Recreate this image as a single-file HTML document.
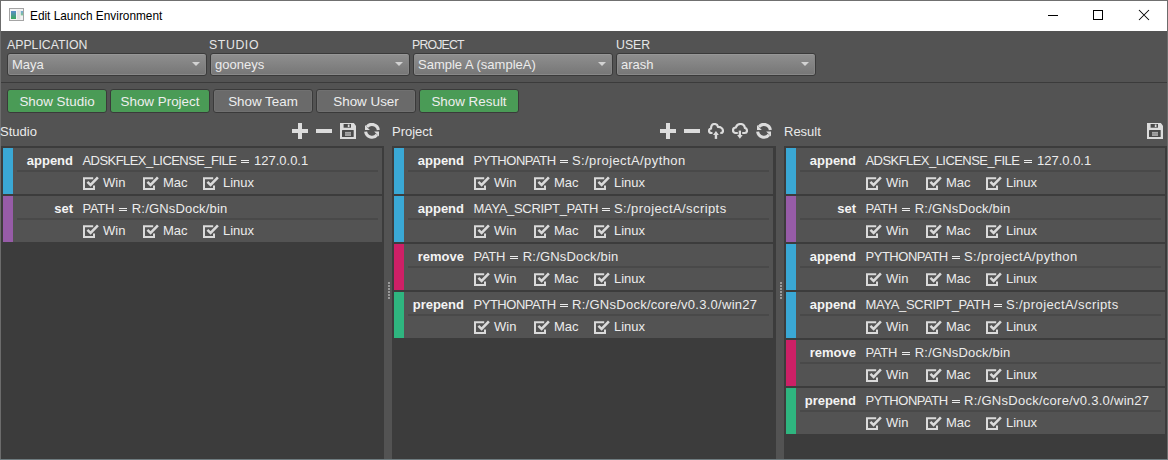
<!DOCTYPE html>
<html><head><meta charset="utf-8">
<style>

*{box-sizing:border-box;margin:0;padding:0}
html,body{width:1168px;height:460px;overflow:hidden;background:#535353;font-family:"Liberation Sans",sans-serif;}
.abs{position:absolute}
#win{position:absolute;left:0;top:0;width:1168px;height:460px;background:#535353;}
#bt{left:0;top:0;width:1168px;height:1px;background:#707070}
#bl{left:0;top:0;width:1px;height:460px;background:#6c6c6c}
#br{left:1167px;top:0;width:1px;height:460px;background:#6c6c6c}
#bb{left:0;top:459px;width:1168px;height:1px;background:#6f7c80}
#title{left:1px;top:1px;width:1166px;height:30px;background:#fff}
#ttxt{left:30px;top:9px;font-size:11.85px;color:#000;white-space:pre;line-height:14px}
.lbl{top:38px;font-size:12.3px;color:#e6e6e6;white-space:pre;line-height:14px}
.combo{top:53px;width:200px;height:23px;border:1px solid #3a3a3a;border-radius:3px;
  background:linear-gradient(#8f8f8f,#767676);box-shadow:inset 0 -1px 0 #888,inset 0 1px 0 #979797,inset 1px 0 0 #8a8a8a,inset -1px 0 0 #858585}
.combo span{position:absolute;left:4px;top:3px;font-size:13px;color:#ececec;white-space:pre;line-height:15px}
.combo i{position:absolute;left:183.75px;top:8.3px;width:0;height:0;border-left:4px solid transparent;border-right:4px solid transparent;border-top:4px solid #d2d2d2}
#sep{left:1px;top:82px;width:1166px;height:1px;background:#3b3b3b}
.btn{top:89px;width:100px;height:24px;border:1px solid #3a3a3a;border-radius:3px;background:#6a6a6a;box-shadow:inset 0 0 0 1px #707070;color:#eee;font-size:13.4px;text-align:center;line-height:23px;white-space:pre}
.btn.g{background:#4a9b56;box-shadow:none}
.ph{top:125px;font-size:13px;color:#eaeaea;white-space:pre;line-height:14px}
.panel{top:146px;height:313px;background:#3c3c3c}
.item{position:absolute;left:2px;width:379px;height:46px;background:#535353}
.bar{position:absolute;left:0;top:0;width:10px;height:46px}
.op{position:absolute;right:309px;top:5px;font-size:13px;font-weight:bold;color:#f4f4f4;white-space:pre;line-height:15px}
.val{position:absolute;left:80px;top:5px;font-size:13px;word-spacing:2px;color:#ececec;white-space:pre;line-height:15px}
.eq{position:absolute;top:12px;width:8px;height:3px;border-top:1px solid #ececec;border-bottom:1px solid #ececec}
.isep{position:absolute;left:14px;top:22px;width:361px;height:2px;background:#494949}
.cb{position:absolute;top:28px;width:80px;height:14px}
.cb svg{position:absolute;left:0;top:0}
.cb span{position:absolute;left:20px;top:0px;font-size:13px;color:#ececec;white-space:pre;line-height:14px}
.ic{position:absolute;top:123px}

</style></head><body>
<div id="win">
<div class="abs" id="title"></div>
<div class="abs" id="bt"></div><div class="abs" id="bl"></div><div class="abs" id="br"></div><div class="abs" id="bb"></div>
<svg class="abs" style="left:9px;top:8px" width="15" height="13" viewBox="0 0 15 13"><defs><linearGradient id="tg" x1="0" y1="0" x2="0" y2="1"><stop offset="0" stop-color="#5b8ccc"/><stop offset="1" stop-color="#3aa85a"/></linearGradient><linearGradient id="tg2" x1="0" y1="0" x2="0" y2="1"><stop offset="0" stop-color="#7aa8d8"/><stop offset="1" stop-color="#7cc890"/></linearGradient></defs><rect x="0.5" y="0.5" width="14" height="12" fill="#f4f4f4" stroke="#a4a4a4"/><rect x="2" y="3" width="5" height="8" fill="url(#tg)"/><rect x="8" y="2.5" width="3.3" height="9" fill="#e2e2e2"/><rect x="11.8" y="3" width="2.2" height="4.4" fill="url(#tg2)"/></svg>
<div class="abs" id="ttxt">Edit Launch Environment</div>
<svg class="abs" style="left:1040px;top:1px" width="126" height="30"><line x1="8" y1="14.5" x2="18" y2="14.5" stroke="#000" stroke-width="1"/><rect x="53.5" y="9.5" width="9" height="9" fill="none" stroke="#000" stroke-width="1"/><path d="M99 9 L109 19 M109 9 L99 19" stroke="#000" stroke-width="1.05" fill="none"/></svg>
<div class="abs lbl" style="left:7px;">APPLICATION</div><div class="abs combo" style="left:7px"><span>Maya</span><i></i></div>
<div class="abs lbl" style="left:210px;letter-spacing:0.6px;margin-left:-1px">STUDIO</div><div class="abs combo" style="left:210px"><span>gooneys</span><i></i></div>
<div class="abs lbl" style="left:413px;letter-spacing:-0.8px;margin-left:-1px">PROJECT</div><div class="abs combo" style="left:413px"><span>Sample A (sampleA)</span><i></i></div>
<div class="abs lbl" style="left:616px;">USER</div><div class="abs combo" style="left:616px"><span>arash</span><i></i></div>
<div class="abs" id="sep"></div>
<div class="abs btn g" style="left:7px">Show Studio</div>
<div class="abs btn g" style="left:110px">Show Project</div>
<div class="abs btn" style="left:213px">Show Team</div>
<div class="abs btn" style="left:316px">Show User</div>
<div class="abs btn g" style="left:419px">Show Result</div>
<div class="abs ph" style="left:0px">Studio</div><svg class="ic" style="left:292px" width="16" height="16"><rect x="0" y="6" width="16" height="4" fill="#dcdcdc"/><rect x="6" y="0" width="4" height="16" fill="#dcdcdc"/></svg><svg class="ic" style="left:316px" width="16" height="16"><rect x="0" y="6" width="16" height="4" fill="#dcdcdc"/></svg><svg class="ic" style="left:340px" width="16" height="16" viewBox="0 0 16 16"><path d="M0 0 H13.8 L16 2.8 V16 H0 Z" fill="#dcdcdc"/><rect x="3.6" y="1" width="7.4" height="3.7" fill="#4a4a4a"/><rect x="7.8" y="1.5" width="1.7" height="2.6" fill="#dcdcdc"/><rect x="2" y="6.9" width="11.7" height="7.1" rx="0.6" fill="#4a4a4a"/><rect x="5" y="8.9" width="6" height="4.1" fill="#a8a8a8"/><rect x="5" y="10" width="6" height="0.6" fill="#8a8a8a"/><rect x="5" y="11.6" width="6" height="0.6" fill="#8a8a8a"/></svg><svg class="ic" style="left:364px" width="16" height="16" viewBox="0 0 16 16"><path d="M14.35 7 A6.4 6.4 0 0 0 2.96 3.86" stroke="#dcdcdc" stroke-width="3.1" fill="none"/><path d="M1 2 L1 7 L5.8 7 Z" fill="#dcdcdc"/><path d="M1.65 8.6 A6.4 6.4 0 0 0 13.04 11.74" stroke="#dcdcdc" stroke-width="3.1" fill="none"/><path d="M15 13.6 L15 8.6 L10.2 8.6 Z" fill="#dcdcdc"/></svg><div class="abs panel" style="left:1px;width:383px"><div class="item" style="top:2px"><div class="bar" style="background:#3aa8d5"></div><div class="op">append</div><div class="val" style="left:79.5px;letter-spacing:-0.555px">ADSKFLEX_LICENSE_FILE</div><div class="eq" style="left:237.9px"></div><div class="val" style="left:251px;letter-spacing:0px">127.0.0.1</div><div class="isep"></div><div class="cb" style="left:80px"><svg width="18" height="16" viewBox="0 0 18 16"><path d="M10.2 2.3 H1 V13 H11 V9.6" stroke="#dadada" stroke-width="2" fill="none"/><path d="M4.4 5.9 L7.6 8.9 L14.9 1.4" stroke="#dadada" stroke-width="2.6" fill="none"/></svg><span>Win</span></div><div class="cb" style="left:140px"><svg width="18" height="16" viewBox="0 0 18 16"><path d="M10.2 2.3 H1 V13 H11 V9.6" stroke="#dadada" stroke-width="2" fill="none"/><path d="M4.4 5.9 L7.6 8.9 L14.9 1.4" stroke="#dadada" stroke-width="2.6" fill="none"/></svg><span>Mac</span></div><div class="cb" style="left:200px"><svg width="18" height="16" viewBox="0 0 18 16"><path d="M10.2 2.3 H1 V13 H11 V9.6" stroke="#dadada" stroke-width="2" fill="none"/><path d="M4.4 5.9 L7.6 8.9 L14.9 1.4" stroke="#dadada" stroke-width="2.6" fill="none"/></svg><span>Linux</span></div></div><div class="item" style="top:50px"><div class="bar" style="background:#975ca8"></div><div class="op">set</div><div class="val" style="left:79.5px;letter-spacing:-0.3px">PATH</div><div class="eq" style="left:116px"></div><div class="val" style="left:128.8px;letter-spacing:0.17px">R:/GNsDock/bin</div><div class="isep"></div><div class="cb" style="left:80px"><svg width="18" height="16" viewBox="0 0 18 16"><path d="M10.2 2.3 H1 V13 H11 V9.6" stroke="#dadada" stroke-width="2" fill="none"/><path d="M4.4 5.9 L7.6 8.9 L14.9 1.4" stroke="#dadada" stroke-width="2.6" fill="none"/></svg><span>Win</span></div><div class="cb" style="left:140px"><svg width="18" height="16" viewBox="0 0 18 16"><path d="M10.2 2.3 H1 V13 H11 V9.6" stroke="#dadada" stroke-width="2" fill="none"/><path d="M4.4 5.9 L7.6 8.9 L14.9 1.4" stroke="#dadada" stroke-width="2.6" fill="none"/></svg><span>Mac</span></div><div class="cb" style="left:200px"><svg width="18" height="16" viewBox="0 0 18 16"><path d="M10.2 2.3 H1 V13 H11 V9.6" stroke="#dadada" stroke-width="2" fill="none"/><path d="M4.4 5.9 L7.6 8.9 L14.9 1.4" stroke="#dadada" stroke-width="2.6" fill="none"/></svg><span>Linux</span></div></div></div>
<div class="abs ph" style="left:392px">Project</div><svg class="ic" style="left:660px" width="16" height="16"><rect x="0" y="6" width="16" height="4" fill="#dcdcdc"/><rect x="6" y="0" width="4" height="16" fill="#dcdcdc"/></svg><svg class="ic" style="left:684px" width="16" height="16"><rect x="0" y="6" width="16" height="4" fill="#dcdcdc"/></svg><svg class="ic" style="left:708px" width="16" height="16" viewBox="0 0 16 16"><path d="M4.5 10 H3.3 C1.9 10 1 9 1 7.8 C1 6.6 1.9 5.7 3 5.5 C3.1 2.9 4.6 1 6.5 1 C8.3 1 9.6 2.2 10.1 3.8 C12.8 3.8 15 5.6 15 8 C15 9.2 14 10 12.3 10" stroke="#dcdcdc" stroke-width="2.2" fill="none"/><rect x="6.75" y="11" width="2.4" height="4.9" fill="#dcdcdc"/><path d="M7.95 8.0 L5.0 11.9 L10.9 11.9 Z" fill="#dcdcdc"/></svg><svg class="ic" style="left:732px" width="16" height="16" viewBox="0 0 16 16"><path d="M5.8 10 H3.5 C2 10 1 8.6 1 7.2 C1 5.7 2.2 4.6 3.8 4.5 C4.5 2.5 6.3 1 8.4 1 C10.6 1 12.5 2.6 12.9 4.9 C14.1 5.1 15 6.2 15 7.8 C15 9 14 10 12.8 10 H10.2" stroke="#dcdcdc" stroke-width="2.2" fill="none"/><rect x="6.7" y="7.6" width="2.3" height="5" fill="#dcdcdc"/><path d="M5.1 11.9 L10.7 11.9 L7.9 15.8 Z" fill="#dcdcdc"/></svg><svg class="ic" style="left:756px" width="16" height="16" viewBox="0 0 16 16"><path d="M14.35 7 A6.4 6.4 0 0 0 2.96 3.86" stroke="#dcdcdc" stroke-width="3.1" fill="none"/><path d="M1 2 L1 7 L5.8 7 Z" fill="#dcdcdc"/><path d="M1.65 8.6 A6.4 6.4 0 0 0 13.04 11.74" stroke="#dcdcdc" stroke-width="3.1" fill="none"/><path d="M15 13.6 L15 8.6 L10.2 8.6 Z" fill="#dcdcdc"/></svg><div class="abs panel" style="left:392px;width:384px"><div class="item" style="top:2px"><div class="bar" style="background:#3aa8d5"></div><div class="op">append</div><div class="val" style="left:79.5px;letter-spacing:-0.48px">PYTHONPATH</div><div class="eq" style="left:165.5px"></div><div class="val" style="left:178px;letter-spacing:0.41px">S:/projectA/python</div><div class="isep"></div><div class="cb" style="left:80px"><svg width="18" height="16" viewBox="0 0 18 16"><path d="M10.2 2.3 H1 V13 H11 V9.6" stroke="#dadada" stroke-width="2" fill="none"/><path d="M4.4 5.9 L7.6 8.9 L14.9 1.4" stroke="#dadada" stroke-width="2.6" fill="none"/></svg><span>Win</span></div><div class="cb" style="left:140px"><svg width="18" height="16" viewBox="0 0 18 16"><path d="M10.2 2.3 H1 V13 H11 V9.6" stroke="#dadada" stroke-width="2" fill="none"/><path d="M4.4 5.9 L7.6 8.9 L14.9 1.4" stroke="#dadada" stroke-width="2.6" fill="none"/></svg><span>Mac</span></div><div class="cb" style="left:200px"><svg width="18" height="16" viewBox="0 0 18 16"><path d="M10.2 2.3 H1 V13 H11 V9.6" stroke="#dadada" stroke-width="2" fill="none"/><path d="M4.4 5.9 L7.6 8.9 L14.9 1.4" stroke="#dadada" stroke-width="2.6" fill="none"/></svg><span>Linux</span></div></div><div class="item" style="top:50px"><div class="bar" style="background:#3aa8d5"></div><div class="op">append</div><div class="val" style="left:79.5px;letter-spacing:-0.33px">MAYA_SCRIPT_PATH</div><div class="eq" style="left:208px"></div><div class="val" style="left:220px;letter-spacing:0.41px">S:/projectA/scripts</div><div class="isep"></div><div class="cb" style="left:80px"><svg width="18" height="16" viewBox="0 0 18 16"><path d="M10.2 2.3 H1 V13 H11 V9.6" stroke="#dadada" stroke-width="2" fill="none"/><path d="M4.4 5.9 L7.6 8.9 L14.9 1.4" stroke="#dadada" stroke-width="2.6" fill="none"/></svg><span>Win</span></div><div class="cb" style="left:140px"><svg width="18" height="16" viewBox="0 0 18 16"><path d="M10.2 2.3 H1 V13 H11 V9.6" stroke="#dadada" stroke-width="2" fill="none"/><path d="M4.4 5.9 L7.6 8.9 L14.9 1.4" stroke="#dadada" stroke-width="2.6" fill="none"/></svg><span>Mac</span></div><div class="cb" style="left:200px"><svg width="18" height="16" viewBox="0 0 18 16"><path d="M10.2 2.3 H1 V13 H11 V9.6" stroke="#dadada" stroke-width="2" fill="none"/><path d="M4.4 5.9 L7.6 8.9 L14.9 1.4" stroke="#dadada" stroke-width="2.6" fill="none"/></svg><span>Linux</span></div></div><div class="item" style="top:98px"><div class="bar" style="background:#cd2066"></div><div class="op">remove</div><div class="val" style="left:79.5px;letter-spacing:-0.3px">PATH</div><div class="eq" style="left:116px"></div><div class="val" style="left:128.8px;letter-spacing:0.17px">R:/GNsDock/bin</div><div class="isep"></div><div class="cb" style="left:80px"><svg width="18" height="16" viewBox="0 0 18 16"><path d="M10.2 2.3 H1 V13 H11 V9.6" stroke="#dadada" stroke-width="2" fill="none"/><path d="M4.4 5.9 L7.6 8.9 L14.9 1.4" stroke="#dadada" stroke-width="2.6" fill="none"/></svg><span>Win</span></div><div class="cb" style="left:140px"><svg width="18" height="16" viewBox="0 0 18 16"><path d="M10.2 2.3 H1 V13 H11 V9.6" stroke="#dadada" stroke-width="2" fill="none"/><path d="M4.4 5.9 L7.6 8.9 L14.9 1.4" stroke="#dadada" stroke-width="2.6" fill="none"/></svg><span>Mac</span></div><div class="cb" style="left:200px"><svg width="18" height="16" viewBox="0 0 18 16"><path d="M10.2 2.3 H1 V13 H11 V9.6" stroke="#dadada" stroke-width="2" fill="none"/><path d="M4.4 5.9 L7.6 8.9 L14.9 1.4" stroke="#dadada" stroke-width="2.6" fill="none"/></svg><span>Linux</span></div></div><div class="item" style="top:146px"><div class="bar" style="background:#2fb57f"></div><div class="op">prepend</div><div class="val" style="left:79.5px;letter-spacing:-0.48px">PYTHONPATH</div><div class="eq" style="left:165.5px"></div><div class="val" style="left:178px;letter-spacing:0.27px">R:/GNsDock/core/v0.3.0/win27</div><div class="isep"></div><div class="cb" style="left:80px"><svg width="18" height="16" viewBox="0 0 18 16"><path d="M10.2 2.3 H1 V13 H11 V9.6" stroke="#dadada" stroke-width="2" fill="none"/><path d="M4.4 5.9 L7.6 8.9 L14.9 1.4" stroke="#dadada" stroke-width="2.6" fill="none"/></svg><span>Win</span></div><div class="cb" style="left:140px"><svg width="18" height="16" viewBox="0 0 18 16"><path d="M10.2 2.3 H1 V13 H11 V9.6" stroke="#dadada" stroke-width="2" fill="none"/><path d="M4.4 5.9 L7.6 8.9 L14.9 1.4" stroke="#dadada" stroke-width="2.6" fill="none"/></svg><span>Mac</span></div><div class="cb" style="left:200px"><svg width="18" height="16" viewBox="0 0 18 16"><path d="M10.2 2.3 H1 V13 H11 V9.6" stroke="#dadada" stroke-width="2" fill="none"/><path d="M4.4 5.9 L7.6 8.9 L14.9 1.4" stroke="#dadada" stroke-width="2.6" fill="none"/></svg><span>Linux</span></div></div></div>
<div class="abs ph" style="left:784px">Result</div><svg class="ic" style="left:1147px" width="16" height="16" viewBox="0 0 16 16"><path d="M0 0 H13.8 L16 2.8 V16 H0 Z" fill="#dcdcdc"/><rect x="3.6" y="1" width="7.4" height="3.7" fill="#4a4a4a"/><rect x="7.8" y="1.5" width="1.7" height="2.6" fill="#dcdcdc"/><rect x="2" y="6.9" width="11.7" height="7.1" rx="0.6" fill="#4a4a4a"/><rect x="5" y="8.9" width="6" height="4.1" fill="#a8a8a8"/><rect x="5" y="10" width="6" height="0.6" fill="#8a8a8a"/><rect x="5" y="11.6" width="6" height="0.6" fill="#8a8a8a"/></svg><div class="abs panel" style="left:784px;width:383px"><div class="item" style="top:2px"><div class="bar" style="background:#3aa8d5"></div><div class="op">append</div><div class="val" style="left:79.5px;letter-spacing:-0.555px">ADSKFLEX_LICENSE_FILE</div><div class="eq" style="left:237.9px"></div><div class="val" style="left:251px;letter-spacing:0px">127.0.0.1</div><div class="isep"></div><div class="cb" style="left:80px"><svg width="18" height="16" viewBox="0 0 18 16"><path d="M10.2 2.3 H1 V13 H11 V9.6" stroke="#dadada" stroke-width="2" fill="none"/><path d="M4.4 5.9 L7.6 8.9 L14.9 1.4" stroke="#dadada" stroke-width="2.6" fill="none"/></svg><span>Win</span></div><div class="cb" style="left:140px"><svg width="18" height="16" viewBox="0 0 18 16"><path d="M10.2 2.3 H1 V13 H11 V9.6" stroke="#dadada" stroke-width="2" fill="none"/><path d="M4.4 5.9 L7.6 8.9 L14.9 1.4" stroke="#dadada" stroke-width="2.6" fill="none"/></svg><span>Mac</span></div><div class="cb" style="left:200px"><svg width="18" height="16" viewBox="0 0 18 16"><path d="M10.2 2.3 H1 V13 H11 V9.6" stroke="#dadada" stroke-width="2" fill="none"/><path d="M4.4 5.9 L7.6 8.9 L14.9 1.4" stroke="#dadada" stroke-width="2.6" fill="none"/></svg><span>Linux</span></div></div><div class="item" style="top:50px"><div class="bar" style="background:#975ca8"></div><div class="op">set</div><div class="val" style="left:79.5px;letter-spacing:-0.3px">PATH</div><div class="eq" style="left:116px"></div><div class="val" style="left:128.8px;letter-spacing:0.17px">R:/GNsDock/bin</div><div class="isep"></div><div class="cb" style="left:80px"><svg width="18" height="16" viewBox="0 0 18 16"><path d="M10.2 2.3 H1 V13 H11 V9.6" stroke="#dadada" stroke-width="2" fill="none"/><path d="M4.4 5.9 L7.6 8.9 L14.9 1.4" stroke="#dadada" stroke-width="2.6" fill="none"/></svg><span>Win</span></div><div class="cb" style="left:140px"><svg width="18" height="16" viewBox="0 0 18 16"><path d="M10.2 2.3 H1 V13 H11 V9.6" stroke="#dadada" stroke-width="2" fill="none"/><path d="M4.4 5.9 L7.6 8.9 L14.9 1.4" stroke="#dadada" stroke-width="2.6" fill="none"/></svg><span>Mac</span></div><div class="cb" style="left:200px"><svg width="18" height="16" viewBox="0 0 18 16"><path d="M10.2 2.3 H1 V13 H11 V9.6" stroke="#dadada" stroke-width="2" fill="none"/><path d="M4.4 5.9 L7.6 8.9 L14.9 1.4" stroke="#dadada" stroke-width="2.6" fill="none"/></svg><span>Linux</span></div></div><div class="item" style="top:98px"><div class="bar" style="background:#3aa8d5"></div><div class="op">append</div><div class="val" style="left:79.5px;letter-spacing:-0.48px">PYTHONPATH</div><div class="eq" style="left:165.5px"></div><div class="val" style="left:178px;letter-spacing:0.41px">S:/projectA/python</div><div class="isep"></div><div class="cb" style="left:80px"><svg width="18" height="16" viewBox="0 0 18 16"><path d="M10.2 2.3 H1 V13 H11 V9.6" stroke="#dadada" stroke-width="2" fill="none"/><path d="M4.4 5.9 L7.6 8.9 L14.9 1.4" stroke="#dadada" stroke-width="2.6" fill="none"/></svg><span>Win</span></div><div class="cb" style="left:140px"><svg width="18" height="16" viewBox="0 0 18 16"><path d="M10.2 2.3 H1 V13 H11 V9.6" stroke="#dadada" stroke-width="2" fill="none"/><path d="M4.4 5.9 L7.6 8.9 L14.9 1.4" stroke="#dadada" stroke-width="2.6" fill="none"/></svg><span>Mac</span></div><div class="cb" style="left:200px"><svg width="18" height="16" viewBox="0 0 18 16"><path d="M10.2 2.3 H1 V13 H11 V9.6" stroke="#dadada" stroke-width="2" fill="none"/><path d="M4.4 5.9 L7.6 8.9 L14.9 1.4" stroke="#dadada" stroke-width="2.6" fill="none"/></svg><span>Linux</span></div></div><div class="item" style="top:146px"><div class="bar" style="background:#3aa8d5"></div><div class="op">append</div><div class="val" style="left:79.5px;letter-spacing:-0.33px">MAYA_SCRIPT_PATH</div><div class="eq" style="left:208px"></div><div class="val" style="left:220px;letter-spacing:0.41px">S:/projectA/scripts</div><div class="isep"></div><div class="cb" style="left:80px"><svg width="18" height="16" viewBox="0 0 18 16"><path d="M10.2 2.3 H1 V13 H11 V9.6" stroke="#dadada" stroke-width="2" fill="none"/><path d="M4.4 5.9 L7.6 8.9 L14.9 1.4" stroke="#dadada" stroke-width="2.6" fill="none"/></svg><span>Win</span></div><div class="cb" style="left:140px"><svg width="18" height="16" viewBox="0 0 18 16"><path d="M10.2 2.3 H1 V13 H11 V9.6" stroke="#dadada" stroke-width="2" fill="none"/><path d="M4.4 5.9 L7.6 8.9 L14.9 1.4" stroke="#dadada" stroke-width="2.6" fill="none"/></svg><span>Mac</span></div><div class="cb" style="left:200px"><svg width="18" height="16" viewBox="0 0 18 16"><path d="M10.2 2.3 H1 V13 H11 V9.6" stroke="#dadada" stroke-width="2" fill="none"/><path d="M4.4 5.9 L7.6 8.9 L14.9 1.4" stroke="#dadada" stroke-width="2.6" fill="none"/></svg><span>Linux</span></div></div><div class="item" style="top:194px"><div class="bar" style="background:#cd2066"></div><div class="op">remove</div><div class="val" style="left:79.5px;letter-spacing:-0.3px">PATH</div><div class="eq" style="left:116px"></div><div class="val" style="left:128.8px;letter-spacing:0.17px">R:/GNsDock/bin</div><div class="isep"></div><div class="cb" style="left:80px"><svg width="18" height="16" viewBox="0 0 18 16"><path d="M10.2 2.3 H1 V13 H11 V9.6" stroke="#dadada" stroke-width="2" fill="none"/><path d="M4.4 5.9 L7.6 8.9 L14.9 1.4" stroke="#dadada" stroke-width="2.6" fill="none"/></svg><span>Win</span></div><div class="cb" style="left:140px"><svg width="18" height="16" viewBox="0 0 18 16"><path d="M10.2 2.3 H1 V13 H11 V9.6" stroke="#dadada" stroke-width="2" fill="none"/><path d="M4.4 5.9 L7.6 8.9 L14.9 1.4" stroke="#dadada" stroke-width="2.6" fill="none"/></svg><span>Mac</span></div><div class="cb" style="left:200px"><svg width="18" height="16" viewBox="0 0 18 16"><path d="M10.2 2.3 H1 V13 H11 V9.6" stroke="#dadada" stroke-width="2" fill="none"/><path d="M4.4 5.9 L7.6 8.9 L14.9 1.4" stroke="#dadada" stroke-width="2.6" fill="none"/></svg><span>Linux</span></div></div><div class="item" style="top:242px"><div class="bar" style="background:#2fb57f"></div><div class="op">prepend</div><div class="val" style="left:79.5px;letter-spacing:-0.48px">PYTHONPATH</div><div class="eq" style="left:165.5px"></div><div class="val" style="left:178px;letter-spacing:0.27px">R:/GNsDock/core/v0.3.0/win27</div><div class="isep"></div><div class="cb" style="left:80px"><svg width="18" height="16" viewBox="0 0 18 16"><path d="M10.2 2.3 H1 V13 H11 V9.6" stroke="#dadada" stroke-width="2" fill="none"/><path d="M4.4 5.9 L7.6 8.9 L14.9 1.4" stroke="#dadada" stroke-width="2.6" fill="none"/></svg><span>Win</span></div><div class="cb" style="left:140px"><svg width="18" height="16" viewBox="0 0 18 16"><path d="M10.2 2.3 H1 V13 H11 V9.6" stroke="#dadada" stroke-width="2" fill="none"/><path d="M4.4 5.9 L7.6 8.9 L14.9 1.4" stroke="#dadada" stroke-width="2.6" fill="none"/></svg><span>Mac</span></div><div class="cb" style="left:200px"><svg width="18" height="16" viewBox="0 0 18 16"><path d="M10.2 2.3 H1 V13 H11 V9.6" stroke="#dadada" stroke-width="2" fill="none"/><path d="M4.4 5.9 L7.6 8.9 L14.9 1.4" stroke="#dadada" stroke-width="2.6" fill="none"/></svg><span>Linux</span></div></div></div>
<div class="abs" style="left:388px;top:282px;width:2px;height:2px;background:#9a9a9a"></div><div class="abs" style="left:388px;top:285px;width:2px;height:2px;background:#9a9a9a"></div><div class="abs" style="left:388px;top:288px;width:2px;height:2px;background:#9a9a9a"></div><div class="abs" style="left:388px;top:291px;width:2px;height:2px;background:#9a9a9a"></div><div class="abs" style="left:388px;top:294px;width:2px;height:2px;background:#9a9a9a"></div><div class="abs" style="left:388px;top:297px;width:2px;height:2px;background:#9a9a9a"></div>
<div class="abs" style="left:780px;top:282px;width:2px;height:2px;background:#9a9a9a"></div><div class="abs" style="left:780px;top:285px;width:2px;height:2px;background:#9a9a9a"></div><div class="abs" style="left:780px;top:288px;width:2px;height:2px;background:#9a9a9a"></div><div class="abs" style="left:780px;top:291px;width:2px;height:2px;background:#9a9a9a"></div><div class="abs" style="left:780px;top:294px;width:2px;height:2px;background:#9a9a9a"></div><div class="abs" style="left:780px;top:297px;width:2px;height:2px;background:#9a9a9a"></div>
</div>
</body></html>
